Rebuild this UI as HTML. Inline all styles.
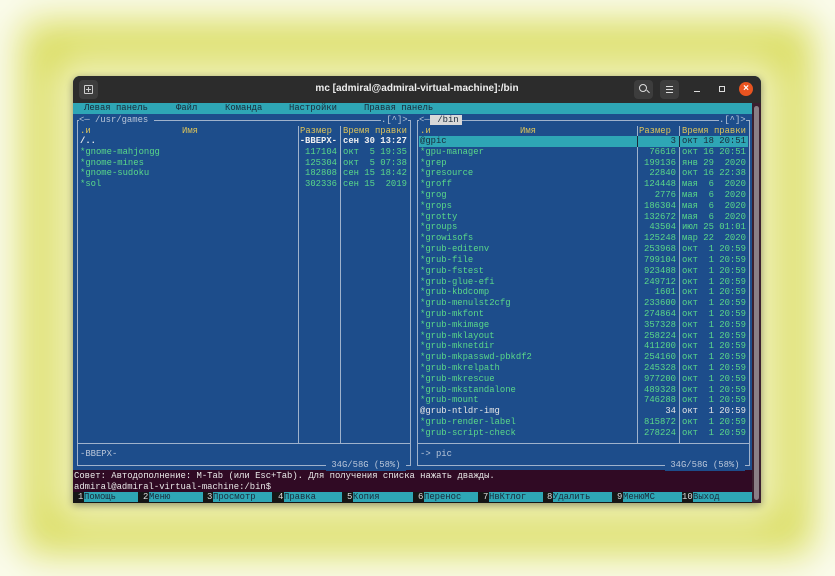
<!DOCTYPE html>
<html><head><meta charset="utf-8"><style>
*{margin:0;padding:0;box-sizing:border-box}
html,body{width:835px;height:576px;overflow:hidden;background:#f4f6e6}
#bg{position:absolute;left:0;top:0;width:835px;height:576px;background:#d9dc58;box-shadow:inset 0 0 40px 22px #fbfcf0}
#glow{position:absolute;left:50px;top:55px;width:735px;height:470px;border-radius:30px;background:rgba(255,255,255,0.55);filter:blur(18px)}
#win{position:absolute;left:73px;top:76px;width:688px;height:427px;background:#1d4d8b;border-radius:7px 7px 0 0;overflow:hidden;box-shadow:0 2px 8px rgba(0,0,0,.4)}
#tb{position:absolute;left:0;top:0;width:688px;height:27px;background:#2c2c2c}
.ttl{position:absolute;left:0;width:688px;top:7px;text-align:center;color:#eee;font:bold 10px "Liberation Sans",sans-serif}
.ib{position:absolute;top:4px;width:19px;height:19px;background:#3d3d3d;border-radius:4px}
.t{position:absolute;font-family:"Liberation Mono","DejaVu Sans Mono",monospace;font-size:8.9px;line-height:10.8px;white-space:pre;color:#b9c6d9}
.g{color:#5ad889}.w{color:#f0f0f0;font-weight:bold}.y{color:#dcc35a}
.hl{position:absolute;background:#d8d8d8}
.line{position:absolute;background:#9fb2cc}
.s{text-align:right}
.m{top:103px;color:#1a2a3a}
</style></head><body>
<div id="bg"></div><div id="glow"></div>
<div id="win">
<div id="tb">
 <div class="ib" style="left:6px"><div style="position:absolute;left:5px;top:5px;width:9px;height:9px;border:1px solid #ccc;border-radius:1px"></div><div style="position:absolute;left:7px;top:9px;width:5px;height:1px;background:#ccc"></div><div style="position:absolute;left:9px;top:7px;width:1px;height:5px;background:#ccc"></div></div>
 <div class="ttl">mc [admiral@admiral-virtual-machine]:/bin</div>
 <div class="ib" style="left:561px"><div style="position:absolute;left:5px;top:4px;width:8px;height:8px;border:1.3px solid #ddd;border-radius:50%"></div><div style="position:absolute;left:12px;top:11px;width:4px;height:1.3px;background:#ddd;transform:rotate(45deg)"></div></div>
 <div class="ib" style="left:587px"><div style="position:absolute;left:6px;top:6px;width:7px;height:1px;background:#ddd;box-shadow:0 3px 0 #ddd,0 6px 0 #ddd"></div></div>
 <div style="position:absolute;left:621px;top:15px;width:6px;height:1px;background:#ddd"></div>
 <div style="position:absolute;left:646px;top:10px;width:6px;height:6px;border:1px solid #ddd"></div>
 <div style="position:absolute;left:666px;top:6px;width:14px;height:14px;border-radius:50%;background:#e95420;color:#fff;font:bold 10px/14px 'Liberation Sans',sans-serif;text-align:center">×</div>
</div>
<div style="position:absolute;left:679px;top:27px;width:9px;height:400px;background:#3a1f2e"></div>
<div style="position:absolute;left:681px;top:30px;width:5px;height:394px;background:#8a7f86;border-radius:3px"></div>
<div style="position:absolute;left:0;top:27px;width:679px;height:11px;background:#2ea6b5"></div>
<div style="position:absolute;left:0;top:394px;width:679px;height:33px;background:#300a24"></div>
</div>

<div class="t m" style="left:84px">Левая панель</div>
<div class="t m" style="left:176px">Файл</div>
<div class="t m" style="left:225px">Команда</div>
<div class="t m" style="left:289px">Настройки</div>
<div class="t m" style="left:364px">Правая панель</div>

<div class="line" style="left:77px;top:120px;width:1px;height:345px"></div>
<div class="line" style="left:410px;top:120px;width:1px;height:345px"></div>
<div class="line" style="left:77px;top:120px;width:334px;height:1px"></div>
<div class="line" style="left:77px;top:465px;width:334px;height:1px"></div>
<div class="line" style="left:77px;top:443px;width:334px;height:1px"></div>
<div class="line" style="left:298px;top:126px;width:1px;height:317px"></div>
<div class="line" style="left:340px;top:126px;width:1px;height:317px"></div>

<div class="line" style="left:417px;top:120px;width:1px;height:345px"></div>
<div class="line" style="left:749px;top:120px;width:1px;height:345px"></div>
<div class="line" style="left:417px;top:120px;width:333px;height:1px"></div>
<div class="line" style="left:417px;top:465px;width:333px;height:1px"></div>
<div class="line" style="left:417px;top:443px;width:333px;height:1px"></div>
<div class="line" style="left:637px;top:126px;width:1px;height:317px"></div>
<div class="line" style="left:679px;top:126px;width:1px;height:317px"></div>

<div class="t" style="left:79px;top:114.7px;background:#1d4d8b">&lt;─ /usr/games </div>
<div class="t" style="left:381px;top:114.7px;background:#1d4d8b">.[^]&gt;</div>
<div class="t" style="left:419px;top:114.7px;background:#1d4d8b">&lt;─</div>
<div class="hl" style="left:430px;top:115px;width:32px;height:10px"></div>
<div class="t" style="left:432px;top:114.7px;color:#1a2a3a"> /bin</div>
<div class="t" style="left:719px;top:114.7px;background:#1d4d8b">.[^]&gt;</div>
<div class="t" style="left:326px;top:460px;background:#1d4d8b"> 34G/58G (58%) </div>
<div class="t" style="left:665px;top:460px;background:#1d4d8b"> 34G/58G (58%) </div>

<div class="t y" style="left:80px;top:125.5px">.и</div>
<div class="t y" style="left:182px;top:125.5px">Имя</div>
<div class="t y" style="left:300px;top:125.5px">Размер</div>
<div class="t y" style="left:343px;top:125.5px">Время правки</div>
<div class="t y" style="left:420px;top:125.5px">.и</div>
<div class="t y" style="left:520px;top:125.5px">Имя</div>
<div class="t y" style="left:639px;top:125.5px">Размер</div>
<div class="t y" style="left:682px;top:125.5px">Время правки</div>

<div class="t w" style="left:80px;top:136px">/..</div><div class="t w s" style="left:296px;width:41px;top:136px">-ВВЕРХ-</div><div class="t w" style="left:343px;top:136px">сен 30 13:27</div>
<div class="t g" style="left:80px;top:146.8px">*gnome-mahjongg</div><div class="t g s" style="left:296px;width:41px;top:146.8px">117104</div><div class="t g" style="left:343px;top:146.8px">окт  5 19:35</div>
<div class="t g" style="left:80px;top:157.6px">*gnome-mines</div><div class="t g s" style="left:296px;width:41px;top:157.6px">125304</div><div class="t g" style="left:343px;top:157.6px">окт  5 07:38</div>
<div class="t g" style="left:80px;top:168.4px">*gnome-sudoku</div><div class="t g s" style="left:296px;width:41px;top:168.4px">182808</div><div class="t g" style="left:343px;top:168.4px">сен 15 18:42</div>
<div class="t g" style="left:80px;top:179.2px">*sol</div><div class="t g s" style="left:296px;width:41px;top:179.2px">302336</div><div class="t g" style="left:343px;top:179.2px">сен 15  2019</div>
<div class="t" style="left:80px;top:449px">-ВВЕРХ-</div>

<div style="position:absolute;left:419px;top:136px;width:329px;height:10.5px;background:#2ea6b5"></div>
<div class="line" style="left:637px;top:136px;width:1px;height:11px;background:#1a2a3a"></div>
<div class="line" style="left:679px;top:136px;width:1px;height:11px;background:#1a2a3a"></div>
<div class="t" style="left:420px;top:136px;color:#1a2a3a">@gpic</div><div class="t s" style="left:630px;width:46px;top:136px;color:#1a2a3a">3</div><div class="t" style="left:682px;top:136px;color:#1a2a3a">окт 18 20:51</div>

<div class="t g" style="left:420px;top:146.8px;line-height:10.81px">*gpu-manager
*grep
*gresource
*groff
*grog
*grops
*grotty
*groups
*growisofs
*grub-editenv
*grub-file
*grub-fstest
*grub-glue-efi
*grub-kbdcomp
*grub-menulst2cfg
*grub-mkfont
*grub-mkimage
*grub-mklayout
*grub-mknetdir
*grub-mkpasswd-pbkdf2
*grub-mkrelpath
*grub-mkrescue
*grub-mkstandalone
*grub-mount
<span style="color:#e6e6e6">@grub-ntldr-img</span>
*grub-render-label
*grub-script-check</div>
<div class="t g s" style="left:620px;width:56px;top:146.8px;line-height:10.81px">76616
199136
22840
124448
2776
186304
132672
43504
125248
253968
799104
923488
249712
1601
233600
274864
357328
258224
411200
254160
245328
977200
489328
746288
<span style="color:#e6e6e6">34</span>
815872
278224</div>
<div class="t g" style="left:682px;top:146.8px;line-height:10.81px">окт 16 20:51
янв 29  2020
окт 16 22:38
мая  6  2020
мая  6  2020
мая  6  2020
мая  6  2020
июл 25 01:01
мар 22  2020
окт  1 20:59
окт  1 20:59
окт  1 20:59
окт  1 20:59
окт  1 20:59
окт  1 20:59
окт  1 20:59
окт  1 20:59
окт  1 20:59
окт  1 20:59
окт  1 20:59
окт  1 20:59
окт  1 20:59
окт  1 20:59
окт  1 20:59
<span style="color:#e6e6e6">окт  1 20:59</span>
окт  1 20:59
окт  1 20:59</div>
<div class="t" style="left:420px;top:449px">-&gt; pic</div>

<div class="t" style="left:74px;top:471px;color:#e8e8e8">Совет: Автодополнение: M-Tab (или Esc+Tab). Для получения списка нажать дважды.</div>
<div class="t" style="left:74px;top:481.5px;color:#e8e8e8">admiral@admiral-virtual-machine:/bin$</div>

<div style="position:absolute;left:73px;top:492px;width:679px;height:11px;background:#161616"></div>
<div style="position:absolute;left:84px;top:492px;width:54px;height:10px;background:#2ea6b5"></div>
<div style="position:absolute;left:149px;top:492px;width:54px;height:10px;background:#2ea6b5"></div>
<div style="position:absolute;left:213px;top:492px;width:59px;height:10px;background:#2ea6b5"></div>
<div style="position:absolute;left:284px;top:492px;width:58px;height:10px;background:#2ea6b5"></div>
<div style="position:absolute;left:353px;top:492px;width:60px;height:10px;background:#2ea6b5"></div>
<div style="position:absolute;left:424px;top:492px;width:54px;height:10px;background:#2ea6b5"></div>
<div style="position:absolute;left:489px;top:492px;width:54px;height:10px;background:#2ea6b5"></div>
<div style="position:absolute;left:553px;top:492px;width:59px;height:10px;background:#2ea6b5"></div>
<div style="position:absolute;left:623px;top:492px;width:59px;height:10px;background:#2ea6b5"></div>
<div style="position:absolute;left:693px;top:492px;width:59px;height:10px;background:#2ea6b5"></div>
<div class="t" style="left:78px;top:491.5px;color:#ddd">1</div><div class="t" style="left:84px;top:491.5px;color:#1a2a3a">Помощь</div>
<div class="t" style="left:143px;top:491.5px;color:#ddd">2</div><div class="t" style="left:149px;top:491.5px;color:#1a2a3a">Меню</div>
<div class="t" style="left:207px;top:491.5px;color:#ddd">3</div><div class="t" style="left:213px;top:491.5px;color:#1a2a3a">Просмотр</div>
<div class="t" style="left:278px;top:491.5px;color:#ddd">4</div><div class="t" style="left:284px;top:491.5px;color:#1a2a3a">Правка</div>
<div class="t" style="left:347px;top:491.5px;color:#ddd">5</div><div class="t" style="left:353px;top:491.5px;color:#1a2a3a">Копия</div>
<div class="t" style="left:418px;top:491.5px;color:#ddd">6</div><div class="t" style="left:424px;top:491.5px;color:#1a2a3a">Перенос</div>
<div class="t" style="left:483px;top:491.5px;color:#ddd">7</div><div class="t" style="left:489px;top:491.5px;color:#1a2a3a">НвКтлог</div>
<div class="t" style="left:547px;top:491.5px;color:#ddd">8</div><div class="t" style="left:553px;top:491.5px;color:#1a2a3a">Удалить</div>
<div class="t" style="left:617px;top:491.5px;color:#ddd">9</div><div class="t" style="left:623px;top:491.5px;color:#1a2a3a">МенюMC</div>
<div class="t" style="left:682px;top:491.5px;color:#ddd">10</div><div class="t" style="left:693px;top:491.5px;color:#1a2a3a">Выход</div>
</body></html>
